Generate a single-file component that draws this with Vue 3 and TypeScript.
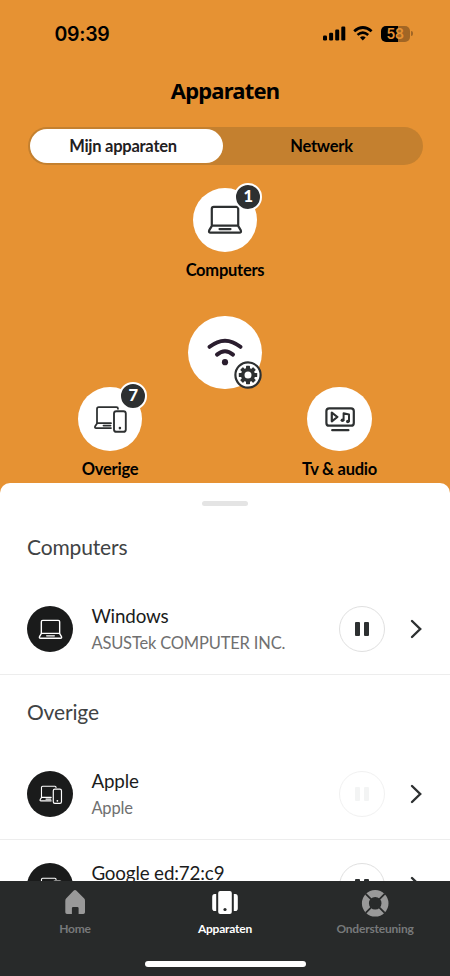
<script setup lang="ts">
import { defineComponent, h } from 'vue'

type Kind = 'laptop' | 'other' | 'tv'

interface Device {
  name: string
  vendor: string
  kind: Kind
  disabled?: boolean
}

interface Group {
  title: string
  devices: Device[]
}

const groups: Group[] = [
  { title: 'Computers', devices: [{ name: 'Windows', vendor: 'ASUSTek COMPUTER INC.', kind: 'laptop' }] },
  {
    title: 'Overige',
    devices: [
      { name: 'Apple', vendor: 'Apple', kind: 'other', disabled: true },
      { name: 'Google ed:72:c9', vendor: 'Google', kind: 'other' },
    ],
  },
]

const nodes: { label: string; kind: Kind; place: string; count?: number }[] = [
  { label: 'Computers', kind: 'laptop', place: 'top', count: 1 },
  { label: 'Overige', kind: 'other', place: 'left', count: 7 },
  { label: 'Tv & audio', kind: 'tv', place: 'right' },
]

const teeth = [0, 45, 90, 135, 180, 225, 270, 315]

const DeviceIcon = defineComponent({
  props: { kind: { type: String, required: true }, weight: { type: Number, default: 2 } },
  setup(props) {
    const p = (d: string, w = 1) => h('path', { d, 'stroke-width': props.weight * w })
    return () => {
      const parts =
        props.kind === 'laptop'
          ? [
              p('M4.8 20V3.8Q4.8 1.8 6.8 1.8H29.2Q31.2 1.8 31.2 3.8V20'),
              p('M5 20.6H31L33.8 25.4Q34.6 27.6 32.4 27.6H3.6Q1.4 27.6 2.2 25.4Z'),
              p('M12.5 24.1H23.5'),
            ]
          : props.kind === 'other'
            ? [
                p('M5 18.8V4.9Q5 3.2 6.7 3.2H24.4Q26 3.2 26 4.8', 0.8),
                p('M19 19.2H5.2L3.3 22Q2.2 24.1 4.3 24.1H19M11.5 21.6H18.5', 0.8),
                p('M24.4 7.2H31.4Q33.8 7.2 33.8 9.6V25.4Q33.8 27.8 31.4 27.8H24.4Q22 27.8 22 25.4V9.6Q22 7.2 24.4 7.2Z', 0.85),
                h('circle', { cx: 27.9, cy: 24.1, r: 1.3, fill: 'currentColor', stroke: 'none' }),
              ]
            : [
                p('M7.2 4.3H29Q31.8 4.3 31.8 7.1V18.9Q31.8 21.7 29 21.7H7.2Q4.4 21.7 4.4 18.9V7.1Q4.4 4.3 7.2 4.3Z'),
                p('M9.8 8.7V17.3L15.4 13ZM10.2 26.2H26.4'),
                p('M21.6 16.3V9.3L27 10.5V17.3', 0.9),
                h('circle', { cx: 20.4, cy: 16.3, r: 1.8, fill: 'currentColor', stroke: 'none' }),
                h('circle', { cx: 25.8, cy: 17.5, r: 1.8, fill: 'currentColor', stroke: 'none' }),
              ]
      return h(
        'svg',
        {
          viewBox: '0 0 36 30',
          fill: 'none',
          stroke: 'currentColor',
          'stroke-linecap': 'round',
          'stroke-linejoin': 'round',
        },
        parts,
      )
    }
  },
})
</script>

<template>
  <div class="screen">
    <header class="status">
      <span class="time">09:39</span>
      <div class="indicators">
        <svg class="signal" viewBox="0 0 23 15">
          <rect x="0" y="9.5" width="4" height="5" rx="1.2" />
          <rect x="6.1" y="6.7" width="4" height="7.8" rx="1.2" />
          <rect x="12.2" y="3.6" width="4" height="10.9" rx="1.2" />
          <rect x="18.3" y="0.5" width="4" height="14" rx="1.2" />
        </svg>
        <svg class="wifi" viewBox="0 0 20 15" fill="none" stroke="#000">
          <path d="M1.2 5.2Q9.8-2.2 18.6 5.2" stroke-width="2.8" />
          <path d="M4.5 8.9Q9.8 4.2 15.2 8.9" stroke-width="2.6" />
          <path d="M7 11.4Q9.8 9 12.7 11.4L9.8 14.4Z" fill="#000" stroke="none" />
        </svg>
        <div class="battery"><span>58</span></div>
        <i class="battery-tip"></i>
      </div>
    </header>

    <h1>Apparaten</h1>

    <div class="tabs">
      <button class="tab selected">Mijn apparaten</button>
      <button class="tab">Netwerk</button>
    </div>

    <section class="map">
      <div v-for="n in nodes" :key="n.label" class="node" :class="n.place">
        <div class="bubble">
          <DeviceIcon :kind="n.kind" :weight="2.2" />
          <b v-if="n.count" class="count">{{ n.count }}</b>
        </div>
        <span>{{ n.label }}</span>
      </div>
      <div class="router">
        <svg class="router-wifi" viewBox="0 0 36 30" fill="none" stroke="#2a1d2e" stroke-width="4" stroke-linecap="round">
          <path d="M2.6 9.8Q18-2.4 33.4 9.8" />
          <path d="M10 17.6Q18 11 26 17.6" />
          <circle cx="18" cy="25.2" r="3.1" fill="#2a1d2e" stroke="none" />
        </svg>
        <svg class="gear" viewBox="0 0 28 28">
          <circle cx="14" cy="14" r="12.6" fill="#fff" stroke="#2d3031" stroke-width="2.2" />
          <g fill="#2d3031">
            <rect v-for="a in teeth" :key="a" x="12" y="4.8" width="4" height="5" rx="0.6" :transform="`rotate(${a} 14 14)`" />
          </g>
          <circle cx="14" cy="14" r="5.3" fill="none" stroke="#2d3031" stroke-width="3.6" />
        </svg>
      </div>
    </section>

    <main class="sheet">
      <div class="grip"><i></i></div>
      <section v-for="g in groups" :key="g.title">
        <h2>{{ g.title }}</h2>
        <article v-for="d in g.devices" :key="d.name" class="row">
          <div class="avatar"><DeviceIcon :kind="d.kind" :weight="2" /></div>
          <div class="info">
            <strong>{{ d.name }}</strong>
            <span>{{ d.vendor }}</span>
          </div>
          <button class="pause" :class="{ off: d.disabled }"><i></i><i></i></button>
          <svg class="chevron" viewBox="0 0 12 20" fill="none" stroke="#2d3031" stroke-width="2.4" stroke-linecap="round">
            <path d="M2 2L10.2 10L2 18" />
          </svg>
        </article>
      </section>
    </main>

    <nav>
      <div class="links">
        <a>
          <svg viewBox="0 0 28 28" fill="#999">
            <path d="M14 1Q14.7 1 15.5 1.8L23 9.3Q24 10.3 24 11.7V23.3Q24 25 22.3 25H17.6V19.3Q17.6 18 16.3 18H12.2Q10.9 18 10.9 19.3V25H6Q4.3 25 4.3 23.3V11.7Q4.3 10.3 5.3 9.3L12.5 1.8Q13.3 1 14 1Z" />
          </svg>
          <span>Home</span>
        </a>
        <a class="active">
          <svg viewBox="0 0 28 28" fill="#fff">
            <path d="M9.2 2H18.8Q20.8 2 20.8 4V23Q20.8 25 18.8 25H9.2Q7.2 25 7.2 23V4Q7.2 2 9.2 2Z" />
            <path d="M5.2 5V22H3.7Q1.2 22 1.2 19.2V8Q1.2 5 3.7 5ZM22.8 5V22H24.3Q26.8 22 26.8 19.2V8Q26.8 5 24.3 5Z" />
            <circle cx="14" cy="20.5" r="1.6" fill="#282a2a" />
          </svg>
          <span>Apparaten</span>
        </a>
        <a>
          <svg viewBox="0 0 28 28" fill="none">
            <circle cx="14.2" cy="14.3" r="9.8" stroke="#999" stroke-width="7" />
            <path d="M4.7 4.8L10.2 10.3M18.2 18.3L23.7 23.8M23.7 4.8L18.2 10.3M10.2 18.3L4.7 23.8" stroke="#282a2a" stroke-width="1.8" />
          </svg>
          <span>Ondersteuning</span>
        </a>
      </div>
      <i class="home-bar"></i>
    </nav>
  </div>
</template>

<style>
body {
  background: #e69233;
}
</style>

<style scoped>
* {
  box-sizing: border-box;
}
.screen {
  width: 450px;
  height: 976px;
  display: flex;
  flex-direction: column;
  overflow: hidden;
  background: #e69233;
  color: #000;
  font-family: Lato, sans-serif;
}
button {
  font: inherit;
  color: inherit;
  border: 0;
  padding: 0;
  background: none;
}
.status {
  height: 67px;
  padding: 0 37.5px 0 54.5px;
  display: flex;
  align-items: center;
  justify-content: space-between;
}
.time {
  font: 600 19.5px/24px Inter, sans-serif;
  letter-spacing: -0.3px;
}
.indicators {
  display: flex;
  align-items: center;
}
.signal {
  width: 23px;
  height: 15px;
}
.wifi {
  width: 20px;
  height: 15px;
  margin-left: 7px;
}
.battery {
  width: 29px;
  height: 16px;
  margin-left: 8px;
  border-radius: 5px;
  background: linear-gradient(90deg, #000 17px, #a16625 17px);
  text-align: center;
}
.battery span {
  display: block;
  font: 600 14px/16px Inter, sans-serif;
  letter-spacing: -0.3px;
  color: #e69233;
}
.battery-tip {
  width: 2px;
  height: 5px;
  margin-left: 1px;
  border-radius: 0 2px 2px 0;
  background: #a16625;
}
h1 {
  margin: 8px 0 0;
  text-align: center;
  font: 700 22px/30px "Noto Sans", sans-serif;
  letter-spacing: -0.8px;
}
.tabs {
  height: 38px;
  margin: 22px 27.5px 0;
  padding: 2px;
  display: flex;
  border-radius: 19px;
  background: #c4802f;
}
.tab {
  flex: 1;
  font-size: 16.5px;
  letter-spacing: -0.25px;
  font-weight: 700;
  border-radius: 17px;
}
.tab.selected {
  flex: 0 0 193px;
  padding-right: 6px;
  background: #fff;
  color: #1f2022;
}
.map {
  height: 318px;
  position: relative;
}
.node {
  position: absolute;
  width: 120px;
  display: flex;
  flex-direction: column;
  align-items: center;
  gap: 8px;
  font-size: 16.5px;
  letter-spacing: -0.25px;
  line-height: 20px;
  font-weight: 700;
}
.node.top {
  left: 165px;
  top: 22.5px;
}
.node.left {
  left: 50px;
  top: 221.5px;
}
.node.right {
  left: 279.5px;
  top: 221.5px;
}
.bubble {
  position: relative;
  width: 64.5px;
  height: 64.5px;
  display: grid;
  place-items: center;
  border-radius: 50%;
  background: #fff;
  color: #2d3031;
}
.bubble svg {
  width: 36px;
  height: 30px;
}
.count {
  position: absolute;
  right: -5px;
  top: -5px;
  width: 28px;
  height: 28px;
  border: 2.5px solid #fff;
  border-radius: 50%;
  background: #2d3031;
  color: #fff;
  font: 900 16.5px/22px Lato, sans-serif;
  text-align: center;
}
.router {
  position: absolute;
  left: 188.3px;
  top: 150.5px;
  width: 73.5px;
  height: 73.5px;
  display: grid;
  place-items: center;
  border-radius: 50%;
  background: #fff;
}
.router-wifi {
  width: 36px;
  height: 30px;
}
.gear {
  position: absolute;
  right: 0;
  bottom: 0;
  width: 28px;
  height: 28px;
}
.sheet {
  height: 398px;
  overflow: hidden;
  border-radius: 10px 10px 0 0;
  background: #fff;
}
.grip {
  height: 27px;
  padding-top: 18px;
  display: flex;
  justify-content: center;
}
.grip i {
  width: 46px;
  height: 5px;
  border-radius: 3px;
  background: #e4e4e4;
}
h2 {
  margin: 0;
  height: 74px;
  padding-left: 27px;
  font-size: 21px;
  letter-spacing: -0.15px;
  line-height: 73px;
  font-weight: 400;
  color: #414344;
}
.row {
  height: 91px;
  padding: 0 28px 0 27.4px;
  display: flex;
  align-items: center;
  border-bottom: 1px solid #ededed;
}
.row + .row {
  padding-top: 2px;
}
.avatar {
  width: 46px;
  height: 46px;
  display: grid;
  place-items: center;
  border-radius: 50%;
  background: #1a1b1b;
  color: #fff;
}
.avatar svg {
  width: 25px;
  height: 21px;
}
.info {
  flex: 1;
  margin-left: 18px;
  display: flex;
  flex-direction: column;
  gap: 1px;
}
.info strong {
  font-size: 18.8px;
  letter-spacing: -0.15px;
  line-height: 26px;
  font-weight: 400;
  color: #1b1c1c;
}
.info span {
  padding-top: 1px;
  font-size: 16.5px;
  letter-spacing: -0.18px;
  line-height: 25px;
  color: #707070;
}
.pause {
  width: 46px;
  height: 46px;
  margin-right: 25.5px;
  display: flex;
  align-items: center;
  justify-content: center;
  gap: 4px;
  border: 1px solid #e0e0e0;
  border-radius: 50%;
  color: #2d3031;
}
.pause i {
  width: 5px;
  height: 14px;
  border-radius: 1px;
  background: currentColor;
}
.pause.off {
  border-color: #f1f1f1;
  color: #f3f4f4;
}
.chevron {
  width: 12px;
  height: 20px;
}
nav {
  height: 95px;
  background: #282a2a;
  display: flex;
  flex-direction: column;
  align-items: center;
}
.links {
  width: 100%;
  height: 80px;
  display: grid;
  grid-template-columns: repeat(3, 1fr);
}
.links a {
  padding-top: 8px;
  display: flex;
  flex-direction: column;
  align-items: center;
  gap: 5px;
  font-size: 12px;
  letter-spacing: -0.2px;
  line-height: 14px;
  font-weight: 700;
  color: #77797a;
}
.links a.active {
  color: #fff;
}
.links svg {
  width: 28px;
  height: 28px;
}
.home-bar {
  width: 161px;
  height: 6px;
  border-radius: 3px;
  background: #fff;
}
</style>
